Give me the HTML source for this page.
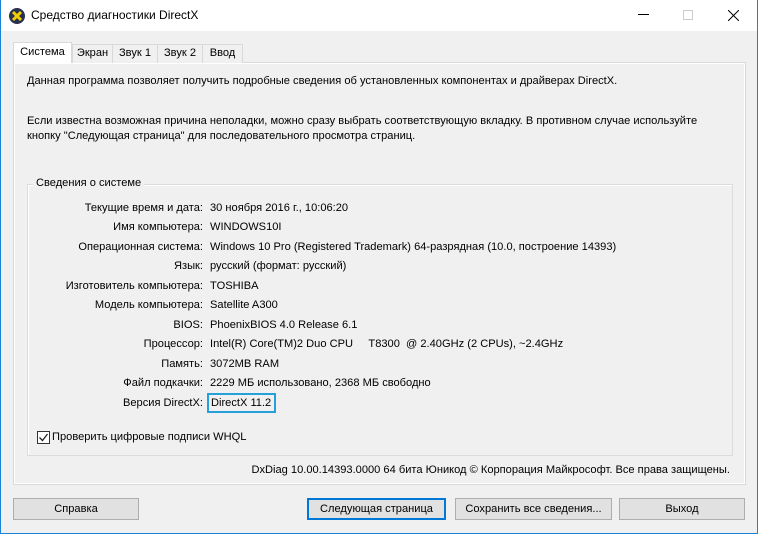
<!DOCTYPE html>
<html><head><meta charset="utf-8"><style>
*{margin:0;padding:0;box-sizing:border-box}
body{width:758px;height:534px;overflow:hidden;background:#f0f0f0;font-family:"Liberation Sans",sans-serif;font-size:11.1px;color:#000;position:relative}
.abs{position:absolute;white-space:nowrap}
#win{position:absolute;left:0;top:0;width:758px;height:534px;border:1px solid #1883d7;border-top:none}
#title{position:absolute;left:0;top:0;width:758px;height:31px;background:#fff}
.tab{position:absolute;top:44px;height:19px;border:1px solid #d9d9d9;border-bottom:none;background:#f0f0f0;text-align:center;line-height:17px}
.btn{position:absolute;top:498px;height:22px;border:1px solid #adadad;background:#e1e1e1;text-align:center;line-height:20px}
.lbl{position:absolute;right:555px;white-space:nowrap}
.val{position:absolute;left:210px;white-space:nowrap}
</style></head><body>
<div id="title">
<svg class="abs" style="left:8px;top:7px" width="18" height="18" viewBox="0 0 18 18"><circle cx="9" cy="9" r="8" fill="#2a3050"/><path d="M5 5L13 13M13 5L5 13" stroke="#f0d000" stroke-width="3"/></svg>
<div class="abs" style="left:31px;top:8px;font-size:12px">Средство диагностики DirectX</div>
<div class="abs" style="left:638px;top:14px;width:11px;height:1px;background:#000"></div>
<div class="abs" style="left:683px;top:10px;width:10px;height:10px;border:1px solid #ccc"></div>
<svg class="abs" style="left:728px;top:10px" width="11" height="11"><path d="M0 0L11 11M11 0L0 11" stroke="#000" stroke-width="1"/></svg>
</div>
<div class="abs" style="left:13px;top:62px;width:733px;height:423px;border:1px solid #d9d9d9;background:#f0f0f0;box-shadow:inset 0 0 0 1px #fff"></div>
<div class="tab" style="left:13px;top:42px;width:59px;height:21px;background:#fff;border-color:#d9d9d9;z-index:2;line-height:19px">Система</div>
<div class="tab" style="left:72px;width:41px">Экран</div>
<div class="tab" style="left:112px;width:46px">Звук 1</div>
<div class="tab" style="left:157px;width:46px">Звук 2</div>
<div class="tab" style="left:202px;width:41px">Ввод</div>
<div class="abs" style="left:27px;top:75px">Данная программа позволяет получить подробные сведения об установленных компонентах и драйверах DirectX.</div>
<div class="abs" style="left:27px;top:115px">Если известна возможная причина неполадки, можно сразу выбрать соответствующую вкладку. В противном случае используйте</div>
<div class="abs" style="left:27px;top:130px">кнопку "Следующая страница" для последовательного просмотра страниц.</div>
<div class="abs" style="left:27px;top:184px;width:706px;height:272px;border:1px solid #dcdcdc;box-shadow:1px 1px 0 #fff inset"></div>
<div class="abs" style="left:33px;top:177px;background:#f0f0f0;padding:0 3px">Сведения о системе</div>
<div class="lbl" style="top:202px">Текущие время и дата:</div><div class="val" style="top:202px">30 ноября 2016 г., 10:06:20</div>
<div class="lbl" style="top:221px">Имя компьютера:</div><div class="val" style="top:221px">WINDOWS10I</div>
<div class="lbl" style="top:241px">Операционная система:</div><div class="val" style="top:241px">Windows 10 Pro (Registered Trademark) 64-разрядная (10.0, построение 14393)</div>
<div class="lbl" style="top:260px">Язык:</div><div class="val" style="top:260px">русский (формат: русский)</div>
<div class="lbl" style="top:280px">Изготовитель компьютера:</div><div class="val" style="top:280px">TOSHIBA</div>
<div class="lbl" style="top:299px">Модель компьютера:</div><div class="val" style="top:299px">Satellite A300</div>
<div class="lbl" style="top:319px">BIOS:</div><div class="val" style="top:319px">PhoenixBIOS 4.0 Release 6.1</div>
<div class="lbl" style="top:338px">Процессор:</div><div class="val" style="top:338px">Intel(R) Core(TM)2 Duo CPU &nbsp;&nbsp;&nbsp;&nbsp;T8300 &nbsp;@ 2.40GHz (2 CPUs), ~2.4GHz</div>
<div class="lbl" style="top:358px">Память:</div><div class="val" style="top:358px">3072MB RAM</div>
<div class="lbl" style="top:377px">Файл подкачки:</div><div class="val" style="top:377px">2229 МБ использовано, 2368 МБ свободно</div>
<div class="lbl" style="top:397px">Версия DirectX:</div>
<div class="abs" style="left:207px;top:393px;width:69px;height:20px;border:2px solid #26a0da;padding:2px 0 0 2px">DirectX 11.2</div>
<div class="abs" style="left:37px;top:431px;width:13px;height:13px;border:1px solid #333;background:#fff"></div>
<svg class="abs" style="left:38px;top:432px" width="11" height="11"><path d="M1.5 5.5L4.5 8.5L9.5 2" stroke="#222" stroke-width="1.3" fill="none"/></svg>
<div class="abs" style="left:52px;top:431px">Проверить цифровые подписи WHQL</div>
<div class="abs" style="right:28px;top:464px">DxDiag 10.00.14393.0000 64 бита Юникод © Корпорация Майкрософт. Все права защищены.</div>
<div class="btn" style="left:13px;width:126px">Справка</div>
<div class="btn" style="left:307px;width:139px;border:2px solid #0078d7;line-height:18px">Следующая страница</div>
<div class="btn" style="left:455px;width:157px">Сохранить все сведения...</div>
<div class="btn" style="left:619px;width:126px">Выход</div>
<div id="win"></div>
</body></html>
